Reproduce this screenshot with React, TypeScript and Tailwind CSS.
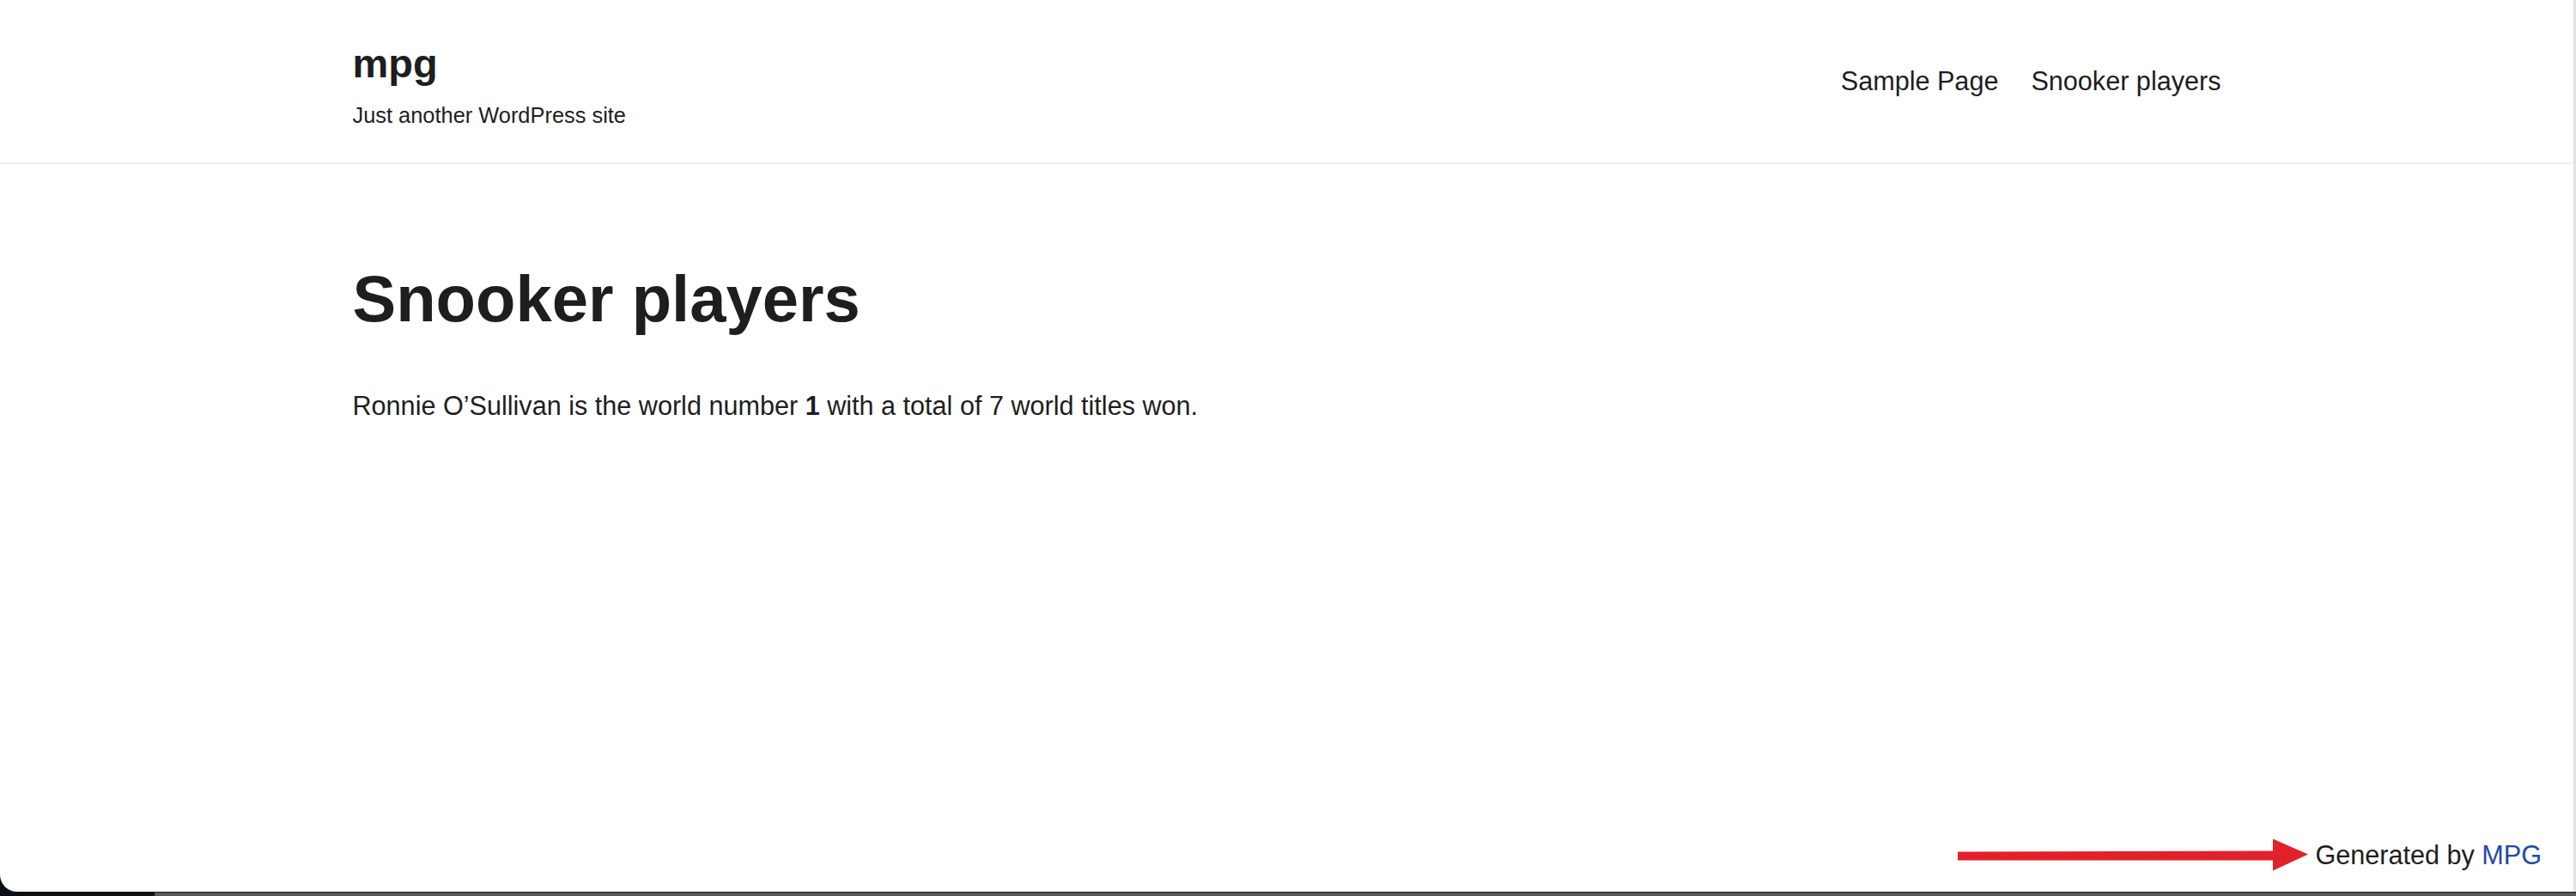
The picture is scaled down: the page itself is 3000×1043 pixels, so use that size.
const font = "font-['Liberation_Sans',Arial,sans-serif]";

function Arrow() {
  return (
    <svg width="408" height="38" viewBox="0 0 408 38" className="shrink-0">
      <polygon
        points="0,15.5 367,14.5 367,0.5 408,18.5 367,37.5 367,25.5 0,25.5"
        fill="#e2222b"
      />
    </svg>
  );
}

export default function App() {
  return (
    <div className={`w-[3000px] h-[1043px] flex flex-col bg-[#0b1015] overflow-hidden ${font}`}>
      <div className="flex h-[1038px]">
        <div className="flex-1 flex flex-col bg-white rounded-bl-[20px] text-[#1e1e1e]">
          {/* Header */}
          <header className="h-[191px] border-b-2 border-[#f1f1f1] shrink-0">
            <div className="w-[2176px] mx-auto flex justify-between items-start">
              <div className="pt-[46px]">
                <div className="text-[47px] leading-[56px] font-bold">mpg</div>
                <div className="mt-[14px] text-[25.4px] leading-[36px]">Just another WordPress site</div>
              </div>
              <nav className="pt-[76px] flex gap-[38px] text-[30.6px] leading-[36px]">
                <span>Sample Page</span>
                <span>Snooker players</span>
              </nav>
            </div>
          </header>

          {/* Content */}
          <main className="w-[2176px] mx-auto pt-[111px]">
            <h1 className="text-[76px] leading-[92px] font-bold">Snooker players</h1>
            <p className="mt-[54px] text-[30.6px] leading-[48px]">
              Ronnie O’Sullivan is the world number <strong className="font-bold">1</strong> with a total of 7 world
              titles won.
            </p>
          </main>

          <div className="flex-1" />

          {/* Footer */}
          <footer className="flex justify-end items-center gap-[8px] pr-[37px] pb-[24px] text-[30.6px] leading-[36px]">
            <Arrow />
            <span>
              Generated by <span className="text-[#2449a8]">MPG</span>
            </span>
          </footer>
        </div>
        <div className="w-[3px] bg-[#e3e3e3]" />
      </div>
      <div className="flex h-[5px]">
        <div className="w-[180px] bg-[#0b1015]" />
        <div className="flex-1 border-t border-[#1c1c1c] bg-[#575757]" />
      </div>
    </div>
  );
}
